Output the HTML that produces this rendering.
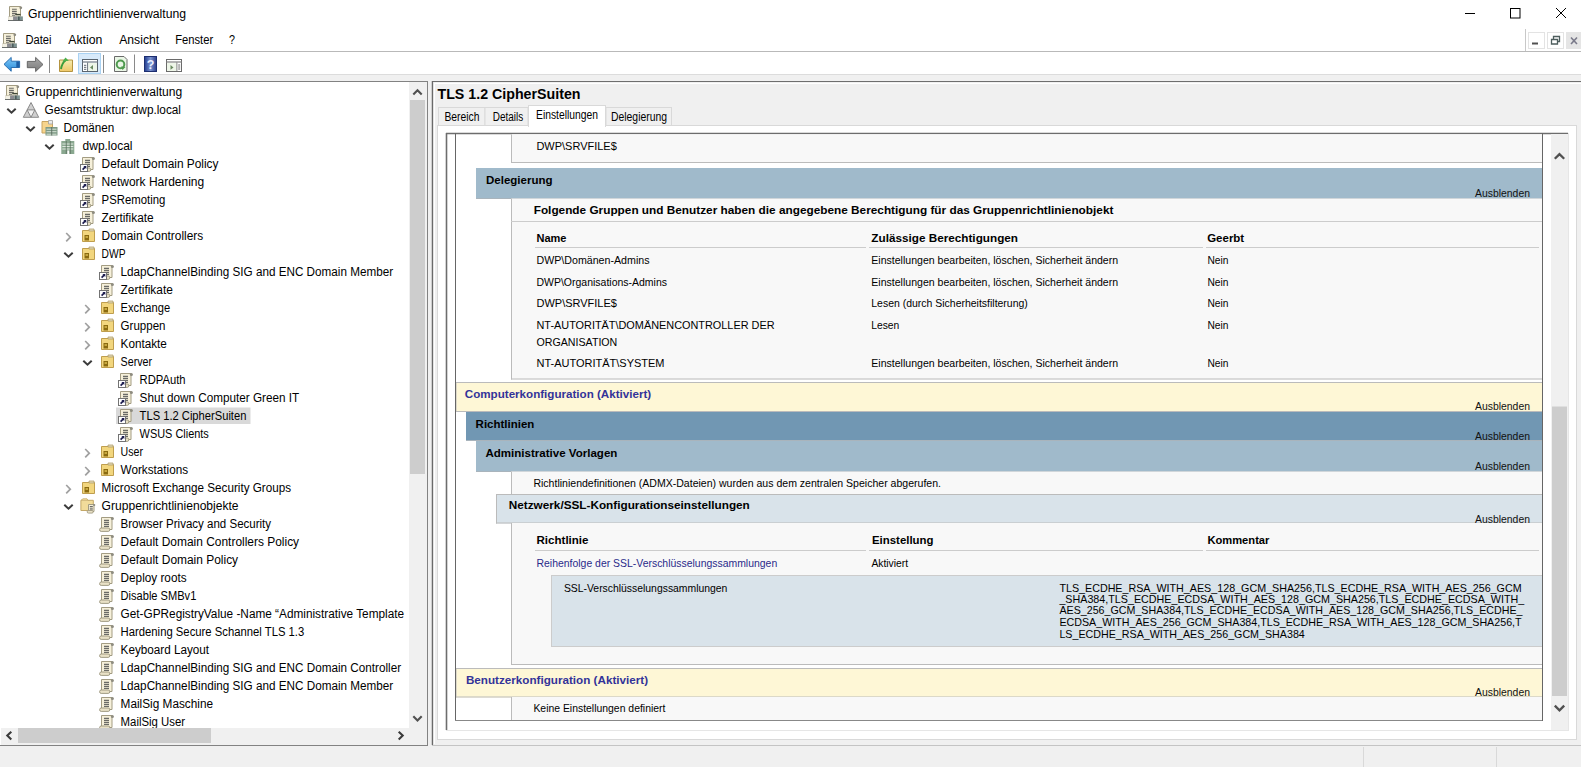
<!DOCTYPE html>
<html lang="de"><head><meta charset="utf-8"><title>Gruppenrichtlinienverwaltung</title>
<style>html,body{margin:0;padding:0;width:1581px;height:767px;overflow:hidden;background:#fff;font-family:"Liberation Sans", sans-serif;}</style>
</head><body>
<svg width="1581" height="767" viewBox="0 0 1581 767" style="display:block;font-family:&quot;Liberation Sans&quot;, sans-serif"><defs>
<symbol id="scr" overflow="visible">
  <path d="M2.5 2.5 H13 V14.5 H2.5 Z" fill="#f6f0da" stroke="#a39c82"/>
  <circle cx="13.4" cy="3.6" r="1.5" fill="#8e8c80"/>
  <path d="M5 5.3h5M5 7.3h5M5 9.3h5M5 11.3h5" stroke="#6a6a66" stroke-width="1.2"/>
  <rect x="0.6" y="13" width="10.2" height="3.4" rx="1.6" fill="#e9e1c6" stroke="#99937a" stroke-width="0.9"/>
</symbol>
<symbol id="ico_gpo" overflow="visible"><use href="#scr"/></symbol>
<symbol id="ico_link" overflow="visible">
  <use href="#scr"/>
  <rect x="0.5" y="9.5" width="7" height="7" fill="#ffffff" stroke="#737373"/>
  <path d="M2.6 14.6 L5.4 11.8" stroke="#1c1c4e" stroke-width="1.7"/>
  <path d="M3.4 11 H6.3 V13.9 Z" fill="#1c1c4e"/>
</symbol>
<symbol id="ico_ou" overflow="visible">
  <path d="M1.5 3.5 H13.5 V14.5 H1.5 Z" fill="#f2d67e" stroke="#bf9e4e"/>
  <path d="M8 2 h5 v2 h-5z" fill="#e6dcb8" stroke="#b0a070" stroke-width="0.8"/>
  <rect x="3.5" y="8" width="4.5" height="5.5" fill="#8a6a10"/>
  <rect x="4.5" y="9" width="2.5" height="2" fill="#c8a840"/>
</symbol>
<symbol id="ico_gpofolder" overflow="visible">
  <path d="M0.9 3.3 H13.3 V13.5 H0.9 Z" fill="#f2dc9a" stroke="#c4a868"/>
  <path d="M1 3.3 L3 1.8 H7 L8 3.3" fill="#f2dc9a" stroke="#c4a868" stroke-width="0.8"/>
  <path d="M8.5 7.5 H14 V14.5 H8.5 Z" fill="#f6f0da" stroke="#a39c82"/>
  <circle cx="14.2" cy="8" r="1.1" fill="#8e8c80"/>
  <path d="M9.8 9.5h3M9.8 11.2h3M9.8 12.9h3" stroke="#6a6a66"/>
  <rect x="7.2" y="13.5" width="6" height="2.6" rx="1.2" fill="#e9e1c6" stroke="#99937a" stroke-width="0.8"/>
</symbol>
<symbol id="ico_gpmc" overflow="visible">
  <path d="M2.5 0.5 H13.5 V11 H2.5 Z" fill="#f6f0da" stroke="#a39c82"/>
  <circle cx="13.8" cy="1.8" r="1.4" fill="#8e8c80"/>
  <path d="M5 3.3h4.8M5 5.4h4.8M5 7.4h4.8M5 9.2h3" stroke="#6a6a66" stroke-width="1.1"/>
  <path d="M8.2 8.6 H13.6" stroke="#404838" stroke-width="1.4"/>
  <rect x="1" y="10.5" width="14.8" height="4.3" fill="#c9c6b4"/>
  <rect x="1.3" y="11" width="4.8" height="3.2" fill="#f2f0e4"/>
  <rect x="6.1" y="10.5" width="4.2" height="4.3" fill="#8a8a90"/>
  <rect x="10.3" y="10.5" width="5.5" height="4.3" fill="#7e9494"/>
  <path d="M11.9 10.5 V14.8" stroke="#303838" stroke-width="1"/>
  <path d="M1 14.5 H15.8" stroke="#5e6262" stroke-width="0.9"/>
</symbol>
<symbol id="ico_forest" overflow="visible">
  <path d="M8 1 L15.7 15.8 H0.3 Z" fill="#cfcfcf" stroke="#8a8a8a"/>
  <path d="M4.15 8.4 H11.85 L8 15.8 Z" fill="#f2f2f2" stroke="#8a8a8a"/>
</symbol>
<symbol id="ico_domains" overflow="visible">
  <path d="M1.5 1.5 H12 V13 H1.5 Z" fill="#f7d48c" stroke="#c8a460"/>
  <path d="M8 0.5 h4 v3.5 h-4z" fill="#eaeaea" stroke="#a0a0a0" stroke-width="0.8"/>
  <rect x="5" y="7" width="12" height="8.5" fill="#7e9a86"/>
  <path d="M6 9.2h10M6 11.7h10M6 14.2h10" stroke="#d8e4d8"/>
  <rect x="10.8" y="7" width="0.9" height="8.5" fill="#5a6a5e"/>
</symbol>
<symbol id="ico_domain" overflow="visible">
  <rect x="2" y="3" width="13" height="13" fill="#8aa890"/>
  <rect x="6" y="1" width="5" height="3" fill="#8aa890"/>
  <path d="M3 6h11M3 8.5h11M3 11h11" stroke="#dfe8df"/>
  <rect x="8" y="12.5" width="2" height="3.5" fill="#ffffff"/>
  <rect x="6.5" y="3" width="0.8" height="13" fill="#5a6e5e"/>
  <rect x="10.5" y="3" width="0.8" height="13" fill="#5a6e5e"/>
</symbol>
<symbol id="tb_back" overflow="visible">
  <path d="M1 7 L7.5 1.5 V4.5 H16.5 V10 H7.5 V13 Z" fill="#3c9ee6" stroke="#2b6fb0" stroke-width="0.8"/>
  <path d="M13 4.5 V10" stroke="#2b6fb0" stroke-width="1.2"/>
</symbol>
<symbol id="tb_fwd" overflow="visible">
  <path d="M16.5 7 L10 1.5 V4.5 H1 V10 H10 V13 Z" fill="#8f8f8f" stroke="#707070" stroke-width="0.8"/>
</symbol>
<symbol id="tb_up" overflow="visible">
  <path d="M1.5 5.5 H15.5 V15.5 H1.5 Z" fill="#f0cc70" stroke="#c49a40"/>
  <path d="M3 13 Q6 7 10 5" fill="none" stroke="#3a9a3a" stroke-width="2"/>
  <path d="M8 2 L12.5 4.5 L8.5 8 Z" fill="#3a9a3a"/>
</symbol>
<symbol id="tb_tree" overflow="visible">
  <rect x="0.5" y="0.5" width="15" height="13" fill="#ffffff" stroke="#6a6a6a"/>
  <path d="M0.5 3 H15.5" stroke="#6a6a6a" stroke-width="1.5"/>
  <path d="M5.5 4 V13.5" stroke="#6a6a6a"/>
  <path d="M2 6h2M2 8.5h2M2 11h2" stroke="#6a6a6a"/>
  <path d="M11 6 L8 8.5 L11 11 Z" fill="#6a8a6a"/>
</symbol>
<symbol id="tb_refresh" overflow="visible">
  <path d="M1.5 1.5 H10 L13.5 5 V15.5 H1.5 Z" fill="#eaf3e6" stroke="#6e6e6e"/>
  <circle cx="7.5" cy="8.5" r="3.8" fill="none" stroke="#4f9f4f" stroke-width="2"/>
  <path d="M9 10 L12.5 12.5 L9 13.5 Z" fill="#4f9f4f"/>
</symbol>
<symbol id="tb_help" overflow="visible">
  <rect x="0.5" y="0.5" width="13" height="15" fill="#3c5aa8" stroke="#22337a"/>
  <rect x="3" y="2" width="8" height="12" fill="#6c88c8" opacity="0.6"/>
  <text x="7" y="12.5" font-size="12" font-weight="700" fill="#ffffff" text-anchor="middle">?</text>
</symbol>
<symbol id="tb_action" overflow="visible">
  <rect x="0.5" y="0.5" width="15" height="13" fill="#ffffff" stroke="#6a6a6a"/>
  <path d="M0.5 3 H15.5" stroke="#6a6a6a" stroke-width="1.5"/>
  <path d="M10.5 4 V13.5" stroke="#6a6a6a"/>
  <path d="M12 6h2M12 8.5h2M12 11h2" stroke="#6a6a6a"/>
  <path d="M4 6 L7 8.5 L4 11 Z" fill="#6a8a6a"/>
</symbol>
</defs><rect x="0" y="0" width="1581" height="767" fill="#ffffff" />
<rect x="0" y="74" width="1581" height="8" fill="#f0f0f0" />
<line x1="0" y1="74.5" x2="1581" y2="74.5" stroke="#dcdcdc" stroke-width="1" />
<rect x="0" y="745" width="1581" height="22" fill="#f0f0f0" />
<line x1="1363.5" y1="747" x2="1363.5" y2="767" stroke="#d9d9d9" stroke-width="1" />
<line x1="1496.5" y1="747" x2="1496.5" y2="767" stroke="#d9d9d9" stroke-width="1" />
<use href="#ico_gpmc" x="7" y="6"/>
<text x="28" y="18" font-size="12" textLength="158" lengthAdjust="spacingAndGlyphs" >Gruppenrichtlinienverwaltung</text>
<line x1="1465" y1="13.5" x2="1475" y2="13.5" stroke="#000" stroke-width="1" />
<rect x="1510.5" y="8.5" width="9.5" height="9.5" fill="none" stroke="#000" stroke-width="1" />
<line x1="1556" y1="8" x2="1566" y2="18" stroke="#000" stroke-width="1" />
<line x1="1566" y1="8" x2="1556" y2="18" stroke="#000" stroke-width="1" />
<use href="#ico_gpmc" x="1" y="33"/>
<text x="25.4" y="44" font-size="12" textLength="26" lengthAdjust="spacingAndGlyphs" >Datei</text>
<text x="68.3" y="44" font-size="12" textLength="34" lengthAdjust="spacingAndGlyphs" >Aktion</text>
<text x="119.2" y="44" font-size="12" textLength="40" lengthAdjust="spacingAndGlyphs" >Ansicht</text>
<text x="175.2" y="44" font-size="12" textLength="38" lengthAdjust="spacingAndGlyphs" >Fenster</text>
<text x="229" y="44" font-size="12" textLength="6" lengthAdjust="spacingAndGlyphs" >?</text>
<line x1="0" y1="51.5" x2="1581" y2="51.5" stroke="#b9b9b9" stroke-width="1" />
<line x1="1525.5" y1="29" x2="1525.5" y2="51" stroke="#c8c8c8" stroke-width="1" />
<rect x="1528.5" y="32.5" width="16" height="16" fill="#ffffff" stroke="#e3e3e3" stroke-width="1" />
<rect x="1547.5" y="32.5" width="16" height="16" fill="#ffffff" stroke="#e3e3e3" stroke-width="1" />
<rect x="1566" y="32" width="16" height="17" fill="#e5e5e5" />
<line x1="1532" y1="43.5" x2="1538" y2="43.5" stroke="#505050" stroke-width="2" />
<path d="M1551.5 39.5h6v4.5h-6z M1553.5 39.5v-3h6v5h-2" fill="none" stroke="#4e5e5e" stroke-width="1.3"/>
<line x1="1571" y1="37.5" x2="1577" y2="44" stroke="#7a7a8a" stroke-width="1.6" />
<line x1="1577" y1="37.5" x2="1571" y2="44" stroke="#7a7a8a" stroke-width="1.6" />
<linearGradient id="gblue" x1="0" y1="0" x2="0" y2="1"><stop offset="0" stop-color="#7cc8f8"/><stop offset="1" stop-color="#2a8ad8"/></linearGradient>
<linearGradient id="ggray" x1="0" y1="0" x2="0" y2="1"><stop offset="0" stop-color="#a8a8a8"/><stop offset="1" stop-color="#7a7a7a"/></linearGradient>
<linearGradient id="gfold" x1="0" y1="0" x2="0" y2="1"><stop offset="0" stop-color="#f4ecb0"/><stop offset="1" stop-color="#f0c868"/></linearGradient>
<linearGradient id="ghelp" x1="0" y1="0" x2="1" y2="0"><stop offset="0" stop-color="#203c90"/><stop offset="0.5" stop-color="#7c94d0"/><stop offset="1" stop-color="#2a3c88"/></linearGradient>
<path d="M4 64.3 L11.2 57.4 V61.2 H19.6 V67.5 H11.2 V71.3 Z" fill="url(#gblue)" stroke="#1d63a8" stroke-width="0.9"/>
<rect x="16.3" y="61.5" width="3" height="5.7" fill="#1e5fa6"/>
<path d="M43 64.5 L35.6 57.4 V61.4 H27.3 V67.7 H35.6 V71.6 Z" fill="url(#ggray)" stroke="#5c5c5c" stroke-width="0.9"/>
<path d="M59.5 60 H72.5 V71.5 H59.5 Z" fill="url(#gfold)" stroke="#b49440"/>
<path d="M61 69 Q62 63 65.5 60.5" fill="none" stroke="#3c9c3c" stroke-width="2"/>
<path d="M62.5 61.5 L65.5 57.6 L68.8 60.8 Z" fill="#4cb04c"/>
<rect x="78.5" y="53.5" width="22" height="20" fill="#d8eafa" stroke="#aad2f2"/>
<rect x="82.5" y="59.5" width="15" height="12" fill="#ffffff" stroke="#5a646e"/>
<path d="M82.5 62 H97.5" stroke="#7a848e" stroke-width="1.3"/>
<path d="M87.7 62.5 V71.5" stroke="#5a646e"/>
<path d="M84 65.3h2.3M84 67.3h2.3M84 69.3h2.3" stroke="#5a646e"/>
<rect x="88.5" y="63" width="8.5" height="8" fill="#eef6e8"/>
<path d="M93 65 L90 67.4 L93 69.8 Z" fill="#6a8a60"/>
<path d="M114.5 56.5 H124 L127 59.5 V71.5 H114.5 Z" fill="#eaf6e6" stroke="#6a6a6a"/>
<circle cx="120.5" cy="64.4" r="3.8" fill="none" stroke="#4f9a4f" stroke-width="2"/>
<path d="M121 66.5 L125.5 67 L122.5 70 Z" fill="#4f9a4f"/>
<rect x="144.5" y="56.5" width="12" height="15" fill="url(#ghelp)" stroke="#1c2e70"/>
<text x="150.6" y="68.8" font-size="12.5" font-weight="700" fill="#e8f0ff" text-anchor="middle">?</text>
<rect x="166.5" y="59.5" width="15" height="12" fill="#ffffff" stroke="#6a6a6a"/>
<path d="M166.5 62 H181.5" stroke="#8a8a8a" stroke-width="1.3"/>
<path d="M176.8 62.5 V71.5" stroke="#6a6a6a"/>
<path d="M178.2 65h2M178.2 67h2M178.2 69h2" stroke="#6a6a6a"/>
<rect x="167" y="63" width="9.3" height="8" fill="#eef6e8"/>
<path d="M170.5 65 L173.5 67.4 L170.5 69.8 Z" fill="#6a8a60"/>
<line x1="49.5" y1="55" x2="49.5" y2="73" stroke="#8a8a8a" stroke-width="1" />
<line x1="103.5" y1="55" x2="103.5" y2="73" stroke="#8a8a8a" stroke-width="1" />
<line x1="134.5" y1="54.5" x2="134.5" y2="73" stroke="#8a8a8a" stroke-width="1" />
<line x1="0" y1="81.5" x2="428" y2="81.5" stroke="#828282" stroke-width="1" />
<line x1="432" y1="81.5" x2="1581" y2="81.5" stroke="#6e6e6e" stroke-width="1" />
<rect x="428" y="82" width="4" height="663" fill="#f0f0f0" />
<line x1="427.5" y1="81" x2="427.5" y2="745" stroke="#828282" stroke-width="1" />
<line x1="0" y1="745.5" x2="428" y2="745.5" stroke="#828282" stroke-width="1" />
<line x1="432.5" y1="81" x2="432.5" y2="745" stroke="#6a6a6a" stroke-width="1.5" />
<line x1="432" y1="745.5" x2="1581" y2="745.5" stroke="#c4c4c4" stroke-width="1" />
<clipPath id="treeclip"><rect x="1" y="82" width="409" height="646"/></clipPath>
<g clip-path="url(#treeclip)">
<use href="#ico_gpmc" x="4" y="85"/>
<text x="25.6" y="95.6" font-size="12" textLength="156.7" lengthAdjust="spacingAndGlyphs" >Gruppenrichtlinienverwaltung</text>
<path d="M7.3 108.7 L11.5 112.7 L15.7 108.7" fill="none" stroke="#3c3c3c" stroke-width="2"/>
<use href="#ico_forest" x="23" y="101.5"/>
<text x="44.6" y="113.6" font-size="12" textLength="136.4" lengthAdjust="spacingAndGlyphs" >Gesamtstruktur: dwp.local</text>
<path d="M26.3 126.7 L30.5 130.7 L34.7 126.7" fill="none" stroke="#3c3c3c" stroke-width="2"/>
<use href="#ico_domains" x="40.5" y="120"/>
<text x="63.6" y="131.6" font-size="12" textLength="50.7" lengthAdjust="spacingAndGlyphs" >Domänen</text>
<path d="M45.3 144.7 L49.5 148.7 L53.7 144.7" fill="none" stroke="#3c3c3c" stroke-width="2"/>
<use href="#ico_domain" x="59.3" y="138"/>
<text x="82.6" y="149.6" font-size="12" textLength="49.9" lengthAdjust="spacingAndGlyphs" >dwp.local</text>
<use href="#ico_link" x="80" y="155"/>
<text x="101.6" y="167.6" font-size="12" textLength="116.9" lengthAdjust="spacingAndGlyphs" >Default Domain Policy</text>
<use href="#ico_link" x="80" y="173"/>
<text x="101.6" y="185.6" font-size="12" textLength="102.6" lengthAdjust="spacingAndGlyphs" >Network Hardening</text>
<use href="#ico_link" x="80" y="191"/>
<text x="101.6" y="203.6" font-size="12" textLength="63.7" lengthAdjust="spacingAndGlyphs" >PSRemoting</text>
<use href="#ico_link" x="80" y="209"/>
<text x="101.6" y="221.6" font-size="12" textLength="52.1" lengthAdjust="spacingAndGlyphs" >Zertifikate</text>
<path d="M66.2 233 L70.3 237.2 L66.2 241.4" fill="none" stroke="#a0a0a0" stroke-width="1.7"/>
<use href="#ico_ou" x="81" y="227"/>
<text x="101.6" y="239.6" font-size="12" textLength="101.6" lengthAdjust="spacingAndGlyphs" >Domain Controllers</text>
<path d="M64.3 252.7 L68.5 256.7 L72.7 252.7" fill="none" stroke="#3c3c3c" stroke-width="2"/>
<use href="#ico_ou" x="81" y="245"/>
<text x="101.6" y="257.6" font-size="12" textLength="23.9" lengthAdjust="spacingAndGlyphs" >DWP</text>
<use href="#ico_link" x="99" y="263"/>
<text x="120.6" y="275.6" font-size="12" textLength="272.5" lengthAdjust="spacingAndGlyphs" >LdapChannelBinding SIG and ENC Domain Member</text>
<use href="#ico_link" x="99" y="281"/>
<text x="120.6" y="293.6" font-size="12" textLength="52.3" lengthAdjust="spacingAndGlyphs" >Zertifikate</text>
<path d="M85.2 305 L89.3 309.2 L85.2 313.4" fill="none" stroke="#a0a0a0" stroke-width="1.7"/>
<use href="#ico_ou" x="100" y="299"/>
<text x="120.6" y="311.6" font-size="12" textLength="49.5" lengthAdjust="spacingAndGlyphs" >Exchange</text>
<path d="M85.2 323 L89.3 327.2 L85.2 331.4" fill="none" stroke="#a0a0a0" stroke-width="1.7"/>
<use href="#ico_ou" x="100" y="317"/>
<text x="120.6" y="329.6" font-size="12" textLength="44.9" lengthAdjust="spacingAndGlyphs" >Gruppen</text>
<path d="M85.2 341 L89.3 345.2 L85.2 349.4" fill="none" stroke="#a0a0a0" stroke-width="1.7"/>
<use href="#ico_ou" x="100" y="335"/>
<text x="120.6" y="347.6" font-size="12" textLength="46.3" lengthAdjust="spacingAndGlyphs" >Kontakte</text>
<path d="M83.3 360.7 L87.5 364.7 L91.7 360.7" fill="none" stroke="#3c3c3c" stroke-width="2"/>
<use href="#ico_ou" x="100" y="353"/>
<text x="120.6" y="365.6" font-size="12" textLength="31.5" lengthAdjust="spacingAndGlyphs" >Server</text>
<use href="#ico_link" x="118" y="371"/>
<text x="139.6" y="383.6" font-size="12" textLength="45.9" lengthAdjust="spacingAndGlyphs" >RDPAuth</text>
<use href="#ico_link" x="118" y="389"/>
<text x="139.6" y="401.6" font-size="12" textLength="159.6" lengthAdjust="spacingAndGlyphs" >Shut down Computer Green IT</text>
<rect x="116" y="407.5" width="134.5" height="16.5" fill="#d9d9d9" />
<use href="#ico_link" x="118" y="407"/>
<text x="139.6" y="419.6" font-size="12" textLength="106.8" lengthAdjust="spacingAndGlyphs" >TLS 1.2 CipherSuiten</text>
<use href="#ico_link" x="118" y="425"/>
<text x="139.6" y="437.6" font-size="12" textLength="69.2" lengthAdjust="spacingAndGlyphs" >WSUS Clients</text>
<path d="M85.2 449 L89.3 453.2 L85.2 457.4" fill="none" stroke="#a0a0a0" stroke-width="1.7"/>
<use href="#ico_ou" x="100" y="443"/>
<text x="120.6" y="455.6" font-size="12" textLength="22.4" lengthAdjust="spacingAndGlyphs" >User</text>
<path d="M85.2 467 L89.3 471.2 L85.2 475.4" fill="none" stroke="#a0a0a0" stroke-width="1.7"/>
<use href="#ico_ou" x="100" y="461"/>
<text x="120.6" y="473.6" font-size="12" textLength="67.5" lengthAdjust="spacingAndGlyphs" >Workstations</text>
<path d="M66.2 485 L70.3 489.2 L66.2 493.4" fill="none" stroke="#a0a0a0" stroke-width="1.7"/>
<use href="#ico_ou" x="81" y="479"/>
<text x="101.6" y="491.6" font-size="12" textLength="189.4" lengthAdjust="spacingAndGlyphs" >Microsoft Exchange Security Groups</text>
<path d="M64.3 504.7 L68.5 508.7 L72.7 504.7" fill="none" stroke="#3c3c3c" stroke-width="2"/>
<use href="#ico_gpofolder" x="80" y="497"/>
<text x="101.6" y="509.6" font-size="12" textLength="137" lengthAdjust="spacingAndGlyphs" >Gruppenrichtlinienobjekte</text>
<use href="#ico_gpo" x="99" y="515"/>
<text x="120.6" y="527.6" font-size="12" textLength="150.5" lengthAdjust="spacingAndGlyphs" >Browser Privacy and Security</text>
<use href="#ico_gpo" x="99" y="533"/>
<text x="120.6" y="545.6" font-size="12" textLength="178.5" lengthAdjust="spacingAndGlyphs" >Default Domain Controllers Policy</text>
<use href="#ico_gpo" x="99" y="551"/>
<text x="120.6" y="563.6" font-size="12" textLength="117.5" lengthAdjust="spacingAndGlyphs" >Default Domain Policy</text>
<use href="#ico_gpo" x="99" y="569"/>
<text x="120.6" y="581.6" font-size="12" textLength="66" lengthAdjust="spacingAndGlyphs" >Deploy roots</text>
<use href="#ico_gpo" x="99" y="587"/>
<text x="120.6" y="599.6" font-size="12" textLength="75.7" lengthAdjust="spacingAndGlyphs" >Disable SMBv1</text>
<use href="#ico_gpo" x="99" y="605"/>
<text x="120.6" y="617.6" font-size="12" textLength="283.5" lengthAdjust="spacingAndGlyphs" >Get-GPRegistryValue -Name “Administrative Template</text>
<use href="#ico_gpo" x="99" y="623"/>
<text x="120.6" y="635.6" font-size="12" textLength="183.7" lengthAdjust="spacingAndGlyphs" >Hardening Secure Schannel TLS 1.3</text>
<use href="#ico_gpo" x="99" y="641"/>
<text x="120.6" y="653.6" font-size="12" textLength="88.5" lengthAdjust="spacingAndGlyphs" >Keyboard Layout</text>
<use href="#ico_gpo" x="99" y="659"/>
<text x="120.6" y="671.6" font-size="12" textLength="280.5" lengthAdjust="spacingAndGlyphs" >LdapChannelBinding SIG and ENC Domain Controller</text>
<use href="#ico_gpo" x="99" y="677"/>
<text x="120.6" y="689.6" font-size="12" textLength="272.6" lengthAdjust="spacingAndGlyphs" >LdapChannelBinding SIG and ENC Domain Member</text>
<use href="#ico_gpo" x="99" y="695"/>
<text x="120.6" y="707.6" font-size="12" textLength="92.5" lengthAdjust="spacingAndGlyphs" >MailSig Maschine</text>
<use href="#ico_gpo" x="99" y="713"/>
<text x="120.6" y="725.6" font-size="12" textLength="64.5" lengthAdjust="spacingAndGlyphs" >MailSig User</text>
</g>
<rect x="409" y="82" width="18" height="646" fill="#f0f0f0" />
<rect x="410" y="100" width="15" height="374" fill="#cdcdcd" />
<path d="M413.3 94.5 L417.5 90.3 L421.7 94.5" fill="none" stroke="#505050" stroke-width="2.1"/>
<path d="M413.3 716.3 L417.5 720.5 L421.7 716.3" fill="none" stroke="#505050" stroke-width="2.1"/>
<rect x="1" y="728" width="426" height="17" fill="#f0f0f0" />
<rect x="18" y="728" width="193" height="15" fill="#cdcdcd" />
<path d="M11.3 731.8 L7.3 735.6 L11.3 739.4" fill="none" stroke="#3a3a3a" stroke-width="2.1"/>
<path d="M398.7 731.8 L402.7 735.6 L398.7 739.4" fill="none" stroke="#3a3a3a" stroke-width="2.1"/>
<rect x="433.5" y="82" width="1147.5" height="663" fill="#f0f0f0" />
<line x1="434" y1="83.5" x2="1581" y2="83.5" stroke="#ffffff" stroke-width="1" />
<line x1="434.5" y1="83" x2="434.5" y2="744" stroke="#ffffff" stroke-width="1" />
<text x="437.5" y="99" font-size="14" font-weight="700" textLength="143" lengthAdjust="spacingAndGlyphs" >TLS 1.2 CipherSuiten</text>
<rect x="437.5" y="125.5" width="1139" height="614" fill="#ffffff" stroke="#d9d9d9" stroke-width="1" />
<rect x="438.5" y="107.5" width="46.5" height="18" fill="#f0f0f0" stroke="#d9d9d9" stroke-width="1" />
<text x="444.4" y="120.7" font-size="12" textLength="35" lengthAdjust="spacingAndGlyphs" >Bereich</text>
<rect x="485" y="107.5" width="43" height="18" fill="#f0f0f0" stroke="#d9d9d9" stroke-width="1" />
<text x="492.7" y="120.7" font-size="12" textLength="30.5" lengthAdjust="spacingAndGlyphs" >Details</text>
<rect x="606" y="107.5" width="65.5" height="18" fill="#f0f0f0" stroke="#d9d9d9" stroke-width="1" />
<text x="611" y="120.7" font-size="12" textLength="56" lengthAdjust="spacingAndGlyphs" >Delegierung</text>
<rect x="528.5" y="105.5" width="77" height="21" fill="#ffffff" stroke="#d9d9d9" stroke-width="1" />
<rect x="529" y="125" width="76" height="2" fill="#ffffff" />
<text x="536" y="119" font-size="12" textLength="62" lengthAdjust="spacingAndGlyphs" >Einstellungen</text>
<rect x="446" y="133" width="1122" height="597" fill="#ffffff" />
<line x1="446.5" y1="133" x2="446.5" y2="730" stroke="#6d6d6d" stroke-width="1.6" />
<line x1="446" y1="133.5" x2="1568" y2="133.5" stroke="#6d6d6d" stroke-width="1.6" />
<line x1="446" y1="730.5" x2="1569" y2="730.5" stroke="#e6e6e6" stroke-width="1" />
<line x1="1568.5" y1="133" x2="1568.5" y2="731" stroke="#e6e6e6" stroke-width="1" />
<rect x="1551" y="134" width="17" height="596" fill="#f0f0f0" />
<rect x="1552" y="406.5" width="15" height="289.5" fill="#cdcdcd" />
<path d="M1554.8 158.8 L1559.5 154.1 L1564.2 158.8" fill="none" stroke="#505050" stroke-width="2.3"/>
<path d="M1554.8 705.6 L1559.5 710.3 L1564.2 705.6" fill="none" stroke="#505050" stroke-width="2.3"/>
<clipPath id="bodyclip"><rect x="447" y="134.3" width="1096" height="586"/></clipPath>
<g clip-path="url(#bodyclip)">
<rect x="511" y="130" width="1031" height="33" fill="#f8f8f8" />
<line x1="511.5" y1="130" x2="511.5" y2="163" stroke="#bbbbbb" stroke-width="1" />
<line x1="511" y1="162.5" x2="1542" y2="162.5" stroke="#bbbbbb" stroke-width="1" />
<text x="536.4" y="150" font-size="11" textLength="80.4" lengthAdjust="spacingAndGlyphs" >DWP\SRVFILE$</text>
<rect x="476" y="168" width="1066" height="31" fill="#a0bacb" />
<line x1="476" y1="198.5" x2="1542" y2="198.5" stroke="#a9b4bc" stroke-width="1" />
<text x="486" y="184" font-size="11" font-weight="700" textLength="66.5" lengthAdjust="spacingAndGlyphs" >Delegierung</text>
<text x="1475" y="196.6" font-size="11" fill="#111" textLength="55" lengthAdjust="spacingAndGlyphs" >Ausblenden</text>
<rect x="511" y="198.5" width="1031" height="181.0" fill="#f8f8f8" />
<line x1="511.5" y1="198.5" x2="511.5" y2="379.5" stroke="#bbbbbb" stroke-width="1" />
<line x1="511" y1="379.0" x2="1542" y2="379.0" stroke="#bbbbbb" stroke-width="1" />
<text x="533.7" y="213.6" font-size="11" font-weight="700" textLength="579.7" lengthAdjust="spacingAndGlyphs" >Folgende Gruppen und Benutzer haben die angegebene Berechtigung für das Gruppenrichtlinienobjekt</text>
<line x1="511" y1="221.5" x2="1542" y2="221.5" stroke="#cccccc" stroke-width="1" />
<text x="536.5" y="242" font-size="11" font-weight="700" textLength="30" lengthAdjust="spacingAndGlyphs" >Name</text>
<text x="871.3" y="242" font-size="11" font-weight="700" textLength="146.7" lengthAdjust="spacingAndGlyphs" >Zulässige Berechtigungen</text>
<text x="1207.2" y="242" font-size="11" font-weight="700" textLength="37" lengthAdjust="spacingAndGlyphs" >Geerbt</text>
<line x1="535" y1="247.5" x2="866" y2="247.5" stroke="#cccccc" stroke-width="1" />
<line x1="869" y1="247.5" x2="1203" y2="247.5" stroke="#cccccc" stroke-width="1" />
<line x1="1206" y1="247.5" x2="1539" y2="247.5" stroke="#cccccc" stroke-width="1" />
<text x="536.5" y="264.3" font-size="11" textLength="113" lengthAdjust="spacingAndGlyphs" >DWP\Domänen-Admins</text>
<text x="871.3" y="264.3" font-size="11" textLength="246.8" lengthAdjust="spacingAndGlyphs" >Einstellungen bearbeiten, löschen, Sicherheit ändern</text>
<text x="1207.4" y="264.3" font-size="11" textLength="21" lengthAdjust="spacingAndGlyphs" >Nein</text>
<text x="536.5" y="286.4" font-size="11" textLength="130.5" lengthAdjust="spacingAndGlyphs" >DWP\Organisations-Admins</text>
<text x="871.3" y="286.4" font-size="11" textLength="246.8" lengthAdjust="spacingAndGlyphs" >Einstellungen bearbeiten, löschen, Sicherheit ändern</text>
<text x="1207.4" y="286.4" font-size="11" textLength="21" lengthAdjust="spacingAndGlyphs" >Nein</text>
<text x="536.5" y="307.3" font-size="11" textLength="80.4" lengthAdjust="spacingAndGlyphs" >DWP\SRVFILE$</text>
<text x="871.3" y="307.3" font-size="11" textLength="156.5" lengthAdjust="spacingAndGlyphs" >Lesen (durch Sicherheitsfilterung)</text>
<text x="1207.4" y="307.3" font-size="11" textLength="21" lengthAdjust="spacingAndGlyphs" >Nein</text>
<text x="536.5" y="329.2" font-size="11" textLength="238" lengthAdjust="spacingAndGlyphs" >NT-AUTORITÄT\DOMÄNENCONTROLLER DER</text>
<text x="871.3" y="329.2" font-size="11" textLength="28" lengthAdjust="spacingAndGlyphs" >Lesen</text>
<text x="1207.4" y="329.2" font-size="11" textLength="21" lengthAdjust="spacingAndGlyphs" >Nein</text>
<text x="536.5" y="367.2" font-size="11" textLength="128" lengthAdjust="spacingAndGlyphs" >NT-AUTORITÄT\SYSTEM</text>
<text x="871.3" y="367.2" font-size="11" textLength="246.8" lengthAdjust="spacingAndGlyphs" >Einstellungen bearbeiten, löschen, Sicherheit ändern</text>
<text x="1207.4" y="367.2" font-size="11" textLength="21" lengthAdjust="spacingAndGlyphs" >Nein</text>
<text x="536.5" y="345.9" font-size="11" textLength="80.8" lengthAdjust="spacingAndGlyphs" >ORGANISATION</text>
<rect x="455.5" y="382" width="1086.5" height="30" fill="#fef7d6" />
<line x1="455.5" y1="382.5" x2="1542" y2="382.5" stroke="#bbbbbb" stroke-width="1" />
<line x1="456.0" y1="382" x2="456.0" y2="412" stroke="#bbbbbb" stroke-width="1" />
<line x1="455.5" y1="411.5" x2="1542" y2="411.5" stroke="#bbbbbb" stroke-width="1" />
<text x="464.8" y="397.6" font-size="11" font-weight="700" fill="#333399" textLength="186.4" lengthAdjust="spacingAndGlyphs" >Computerkonfiguration (Aktiviert)</text>
<text x="1475" y="410.4" font-size="11" fill="#111" textLength="55" lengthAdjust="spacingAndGlyphs" >Ausblenden</text>
<rect x="466" y="412" width="1076" height="29" fill="#7197b3" />
<line x1="466" y1="440.5" x2="1542" y2="440.5" stroke="#a9b4bc" stroke-width="1" />
<text x="475.6" y="428" font-size="11" font-weight="700" textLength="58.7" lengthAdjust="spacingAndGlyphs" >Richtlinien</text>
<text x="1475" y="440.4" font-size="11" fill="#111" textLength="55" lengthAdjust="spacingAndGlyphs" >Ausblenden</text>
<rect x="476" y="441" width="1066" height="31" fill="#a0bacb" />
<line x1="476" y1="471.5" x2="1542" y2="471.5" stroke="#a9b4bc" stroke-width="1" />
<text x="485.4" y="456.8" font-size="11" font-weight="700" textLength="132" lengthAdjust="spacingAndGlyphs" >Administrative Vorlagen</text>
<text x="1475" y="469.6" font-size="11" fill="#111" textLength="55" lengthAdjust="spacingAndGlyphs" >Ausblenden</text>
<rect x="511" y="471.5" width="1031" height="23.5" fill="#f8f8f8" />
<line x1="511.5" y1="471.5" x2="511.5" y2="495" stroke="#bbbbbb" stroke-width="1" />
<line x1="511" y1="494.5" x2="1542" y2="494.5" stroke="#bbbbbb" stroke-width="1" />
<text x="533.4" y="486.8" font-size="11" textLength="407.6" lengthAdjust="spacingAndGlyphs" >Richtliniendefinitionen (ADMX-Dateien) wurden aus dem zentralen Speicher abgerufen.</text>
<rect x="496" y="494" width="1046" height="29.5" fill="#d9e3ea" />
<line x1="496" y1="494.5" x2="1542" y2="494.5" stroke="#bbbbbb" stroke-width="1" />
<line x1="496.5" y1="494" x2="496.5" y2="523.5" stroke="#bbbbbb" stroke-width="1" />
<line x1="496" y1="523.0" x2="1542" y2="523.0" stroke="#bbbbbb" stroke-width="1" />
<text x="508.8" y="509.3" font-size="11" font-weight="700" textLength="241" lengthAdjust="spacingAndGlyphs" >Netzwerk/SSL-Konfigurationseinstellungen</text>
<text x="1475" y="522.5" font-size="11" fill="#111" textLength="55" lengthAdjust="spacingAndGlyphs" >Ausblenden</text>
<rect x="511" y="523" width="1031" height="142" fill="#f8f8f8" />
<line x1="511.5" y1="523" x2="511.5" y2="665" stroke="#bbbbbb" stroke-width="1" />
<line x1="511" y1="664.5" x2="1542" y2="664.5" stroke="#bbbbbb" stroke-width="1" />
<text x="536.5" y="543.5" font-size="11" font-weight="700" textLength="52" lengthAdjust="spacingAndGlyphs" >Richtlinie</text>
<text x="872" y="543.5" font-size="11" font-weight="700" textLength="61.5" lengthAdjust="spacingAndGlyphs" >Einstellung</text>
<text x="1207.4" y="543.5" font-size="11" font-weight="700" textLength="62" lengthAdjust="spacingAndGlyphs" >Kommentar</text>
<line x1="535" y1="550.5" x2="866" y2="550.5" stroke="#cccccc" stroke-width="1" />
<line x1="869" y1="550.5" x2="1203" y2="550.5" stroke="#cccccc" stroke-width="1" />
<line x1="1206" y1="550.5" x2="1539" y2="550.5" stroke="#cccccc" stroke-width="1" />
<text x="536.5" y="567" font-size="11" fill="#2a2a8a" textLength="240.7" lengthAdjust="spacingAndGlyphs" >Reihenfolge der SSL-Verschlüsselungssammlungen</text>
<text x="871.4" y="567" font-size="11" textLength="36.7" lengthAdjust="spacingAndGlyphs" >Aktiviert</text>
<rect x="551.5" y="575.5" width="991" height="71" fill="#d9e3ea" stroke="#cccccc" stroke-width="1" />
<text x="563.9" y="591.7" font-size="11" textLength="163.5" lengthAdjust="spacingAndGlyphs" >SSL-Verschlüsselungssammlungen</text>
<text x="1059.4" y="591.7" font-size="11" textLength="462.2" lengthAdjust="spacingAndGlyphs" >TLS_ECDHE_RSA_WITH_AES_128_GCM_SHA256,TLS_ECDHE_RSA_WITH_AES_256_GCM</text>
<text x="1059.4" y="602.9" font-size="11" textLength="464.8" lengthAdjust="spacingAndGlyphs" >_SHA384,TLS_ECDHE_ECDSA_WITH_AES_128_GCM_SHA256,TLS_ECDHE_ECDSA_WITH_</text>
<text x="1059.4" y="614.4" font-size="11" textLength="463.1" lengthAdjust="spacingAndGlyphs" >AES_256_GCM_SHA384,TLS_ECDHE_ECDSA_WITH_AES_128_GCM_SHA256,TLS_ECDHE_</text>
<text x="1059.4" y="625.9" font-size="11" textLength="462.2" lengthAdjust="spacingAndGlyphs" >ECDSA_WITH_AES_256_GCM_SHA384,TLS_ECDHE_RSA_WITH_AES_128_GCM_SHA256,T</text>
<text x="1059.4" y="637.8" font-size="11" textLength="245.4" lengthAdjust="spacingAndGlyphs" >LS_ECDHE_RSA_WITH_AES_256_GCM_SHA384</text>
<rect x="455.5" y="668" width="1086.5" height="29.5" fill="#fef7d6" />
<line x1="455.5" y1="668.5" x2="1542" y2="668.5" stroke="#bbbbbb" stroke-width="1" />
<line x1="456.0" y1="668" x2="456.0" y2="697.5" stroke="#bbbbbb" stroke-width="1" />
<line x1="455.5" y1="697.0" x2="1542" y2="697.0" stroke="#bbbbbb" stroke-width="1" />
<text x="465.9" y="684" font-size="11" font-weight="700" fill="#333399" textLength="182.2" lengthAdjust="spacingAndGlyphs" >Benutzerkonfiguration (Aktiviert)</text>
<text x="1475" y="696" font-size="11" fill="#111" textLength="55" lengthAdjust="spacingAndGlyphs" >Ausblenden</text>
<rect x="511" y="697" width="1031" height="28" fill="#f8f8f8" />
<line x1="511.5" y1="697" x2="511.5" y2="725" stroke="#bbbbbb" stroke-width="1" />
<line x1="511" y1="724.5" x2="1542" y2="724.5" stroke="#bbbbbb" stroke-width="1" />
<text x="533.4" y="712.4" font-size="11" textLength="132" lengthAdjust="spacingAndGlyphs" >Keine Einstellungen definiert</text>
</g>
<line x1="455.5" y1="133" x2="455.5" y2="720.5" stroke="#666666" stroke-width="1" />
<line x1="455" y1="720.5" x2="1542.5" y2="720.5" stroke="#888888" stroke-width="1" />
<line x1="1542.5" y1="133" x2="1542.5" y2="721" stroke="#666666" stroke-width="1" /></svg>
</body></html>
